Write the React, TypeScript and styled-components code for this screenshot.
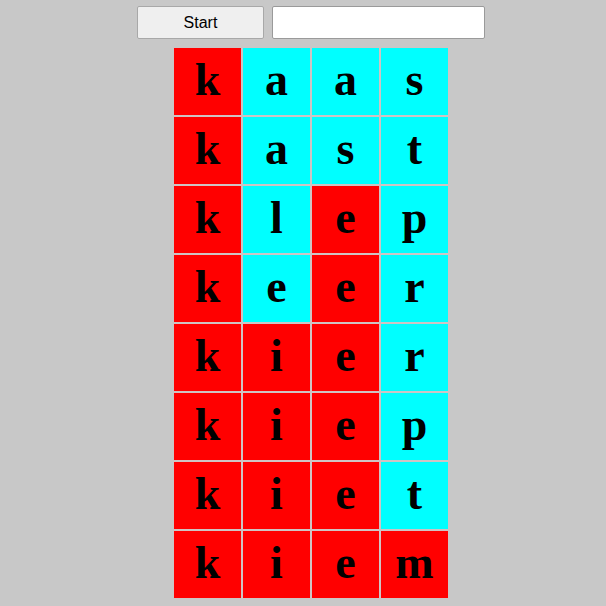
import React from "react";
import styled, { createGlobalStyle } from "styled-components";

const Global = createGlobalStyle`
  html, body { margin: 0; padding: 0; background: #c8c8c8; }
  body { width: 606px; height: 606px; overflow: hidden; }
`;

const Page = styled.div`
  display: flex;
  flex-direction: column;
  align-items: center;
  padding: 6px 0 0 16px;
  gap: 8px;
  box-sizing: border-box;
  height: 606px;
`;

const Toolbar = styled.div`
  display: flex;
  gap: 8px;
  height: 33px;
`;

const Button = styled.button`
  width: 127px;
  height: 33px;
  background: #efefef;
  border: 1px solid #a8a8a8;
  border-radius: 2px;
  font-family: "Liberation Sans", Arial, sans-serif;
  font-size: 16px;
  color: #000;
  padding: 0;
`;

const Input = styled.input`
  width: 213px;
  height: 33px;
  box-sizing: border-box;
  background: #fff;
  border: 1px solid #9a9a9a;
  border-radius: 2px;
`;

const Grid = styled.div`
  display: grid;
  grid-template-columns: repeat(4, 69px);
  grid-auto-rows: 69px;
`;

const Cell = styled.div<{ $on: boolean }>`
  box-sizing: border-box;
  border: 1px solid #cfc4c4;
  background: ${(p) => (p.$on ? "#ff0000" : "#00ffff")};
  display: flex;
  align-items: center;
  justify-content: center;
  font-family: "Liberation Serif", "Times New Roman", serif;
  font-weight: bold;
  font-size: 46px;
  color: #000;
  line-height: 1;
  padding-bottom: 4px;
`;

const rows: [string, string][] = [
  ["kaas", "RCCC"],
  ["kast", "RCCC"],
  ["klep", "RCRC"],
  ["keer", "RCRC"],
  ["kier", "RRRC"],
  ["kiep", "RRRC"],
  ["kiet", "RRRC"],
  ["kiem", "RRRR"],
];

export default function App() {
  return (
    <>
      <Global />
      <Page>
        <Toolbar>
          <Button>Start</Button>
          <Input />
        </Toolbar>
        <Grid>
          {rows.map(([w, c], i) =>
            w.split("").map((ch, j) => (
              <Cell key={`${i}-${j}`} $on={c[j] === "R"}>
                {ch}
              </Cell>
            ))
          )}
        </Grid>
      </Page>
    </>
  );
}
